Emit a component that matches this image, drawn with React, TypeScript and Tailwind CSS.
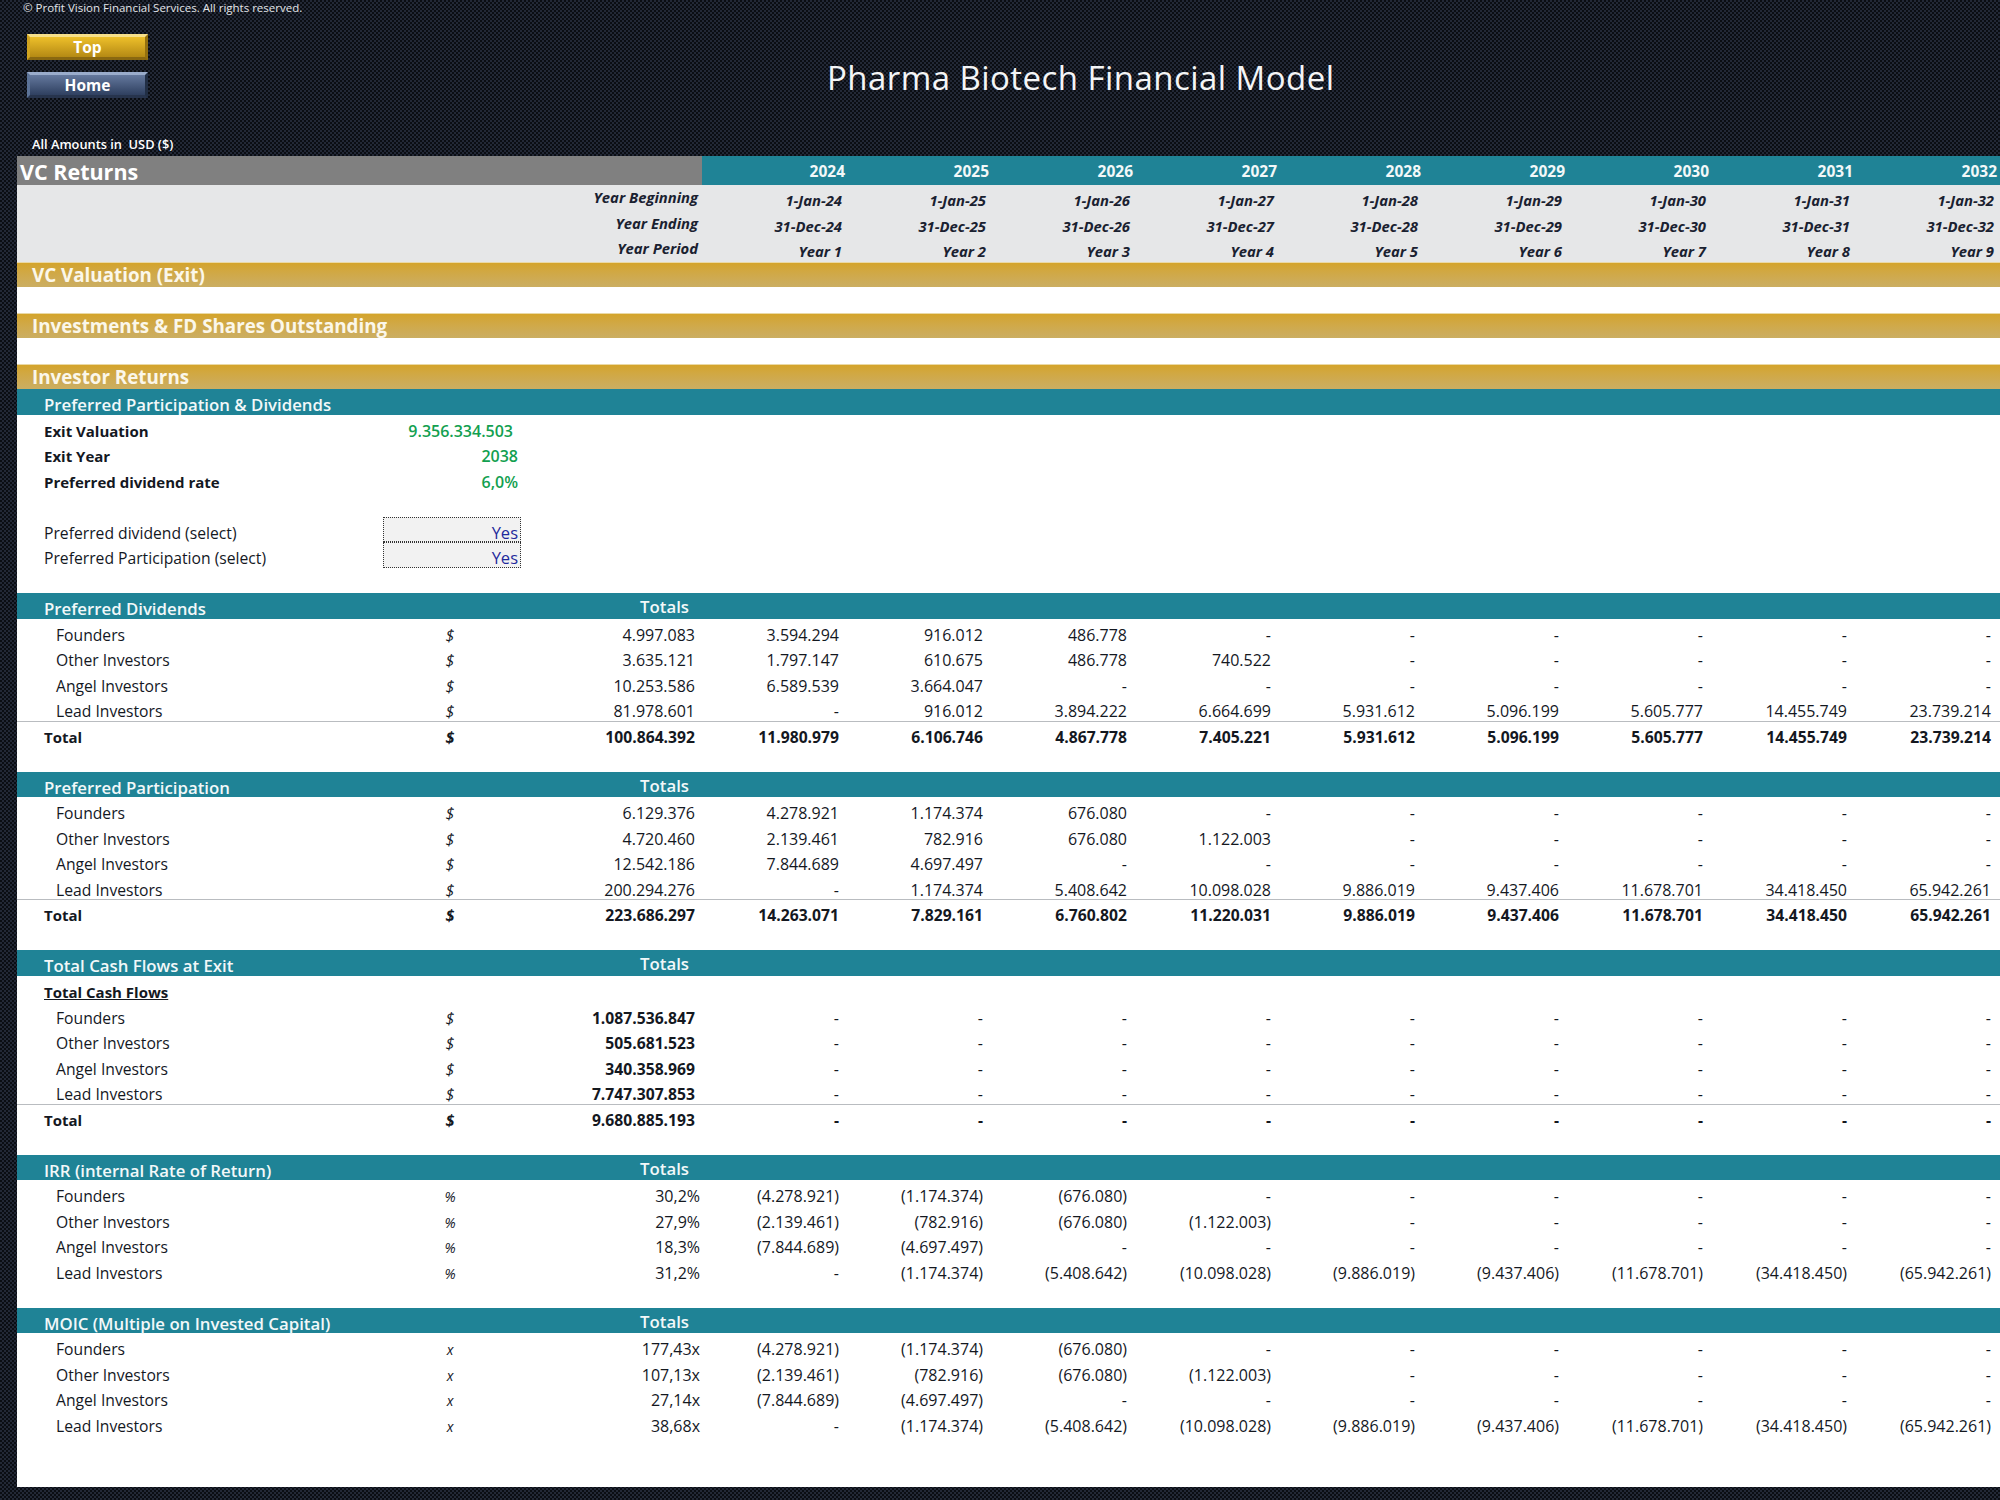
import React from "react";

const years = [2024, 2025, 2026, 2027, 2028, 2029, 2030, 2031, 2032];
const d = "-";

type Line = { label: string; total: string; values: string[]; bold?: boolean };

const dashes = [d, d, d, d, d, d, d, d, d];

const dividends: Line[] = [
  { label: "Founders", total: "4.997.083", values: ["3.594.294", "916.012", "486.778", d, d, d, d, d, d] },
  { label: "Other Investors", total: "3.635.121", values: ["1.797.147", "610.675", "486.778", "740.522", d, d, d, d, d] },
  { label: "Angel Investors", total: "10.253.586", values: ["6.589.539", "3.664.047", d, d, d, d, d, d, d] },
  { label: "Lead Investors", total: "81.978.601", values: [d, "916.012", "3.894.222", "6.664.699", "5.931.612", "5.096.199", "5.605.777", "14.455.749", "23.739.214"] },
  { label: "Total", bold: true, total: "100.864.392", values: ["11.980.979", "6.106.746", "4.867.778", "7.405.221", "5.931.612", "5.096.199", "5.605.777", "14.455.749", "23.739.214"] },
];

const participation: Line[] = [
  { label: "Founders", total: "6.129.376", values: ["4.278.921", "1.174.374", "676.080", d, d, d, d, d, d] },
  { label: "Other Investors", total: "4.720.460", values: ["2.139.461", "782.916", "676.080", "1.122.003", d, d, d, d, d] },
  { label: "Angel Investors", total: "12.542.186", values: ["7.844.689", "4.697.497", d, d, d, d, d, d, d] },
  { label: "Lead Investors", total: "200.294.276", values: [d, "1.174.374", "5.408.642", "10.098.028", "9.886.019", "9.437.406", "11.678.701", "34.418.450", "65.942.261"] },
  { label: "Total", bold: true, total: "223.686.297", values: ["14.263.071", "7.829.161", "6.760.802", "11.220.031", "9.886.019", "9.437.406", "11.678.701", "34.418.450", "65.942.261"] },
];

const cashFlows: Line[] = [
  { label: "Founders", total: "1.087.536.847", values: dashes },
  { label: "Other Investors", total: "505.681.523", values: dashes },
  { label: "Angel Investors", total: "340.358.969", values: dashes },
  { label: "Lead Investors", total: "7.747.307.853", values: dashes },
  { label: "Total", bold: true, total: "9.680.885.193", values: dashes },
];

const outflows = [
  ["(4.278.921)", "(1.174.374)", "(676.080)", d, d, d, d, d, d],
  ["(2.139.461)", "(782.916)", "(676.080)", "(1.122.003)", d, d, d, d, d],
  ["(7.844.689)", "(4.697.497)", d, d, d, d, d, d, d],
  [d, "(1.174.374)", "(5.408.642)", "(10.098.028)", "(9.886.019)", "(9.437.406)", "(11.678.701)", "(34.418.450)", "(65.942.261)"],
];
const names = ["Founders", "Other Investors", "Angel Investors", "Lead Investors"];
const irr: Line[] = ["30,2%", "27,9%", "18,3%", "31,2%"].map((total, i) => ({ label: names[i], total, values: outflows[i] }));
const moic: Line[] = ["177,43x", "107,13x", "27,14x", "38,68x"].map((total, i) => ({ label: names[i], total, values: outflows[i] }));

const GoldBar = ({ title }: { title: string }) => (
  <div className="h-[25.53px] bg-gradient-to-b from-[#d4a42a] to-[#cbae62] border-t border-[#ead9a6] pl-[15px] text-[18.8px] font-bold leading-[24px] text-[#fbf7ea]">
    {title}
  </div>
);

const TealBar = ({ title, totals }: { title: string; totals?: boolean }) => (
  <div className="h-[25.53px] bg-[#1f8396] flex text-[16.8px] font-semibold text-[#f2f8f9]">
    <div className="w-[483px] pl-[27px] pt-[4px] leading-[23.5px] whitespace-nowrap">{title}</div>
    {totals && <div className="w-[189px] text-right pt-[2px] leading-[23px]">Totals</div>}
  </div>
);

const DataRow = ({ line, unit, boldTotal, tightTotal }: { line: Line; unit: string; boldTotal?: boolean; tightTotal?: boolean }) => (
  <div
    className={`h-[25.53px] grid grid-cols-[383px_100px_202px_repeat(9,144px)] leading-[25.5px] text-[#14181f] ${
      line.bold ? "font-bold text-[15.7px] border-t border-[#b9bcc0] pt-[3px]" : "text-[16px] pt-[4px]"
    }`}
  >
    <div className={line.bold ? "pl-[27px] text-[15px]" : "pl-[39px] text-[15.7px]"}>{line.label}</div>
    <div className={`text-center italic ${unit === "$" ? "text-[16px]" : "text-[14px]"}`}>{unit}</div>
    <div className={`text-right ${tightTotal ? "pr-[2px]" : "pr-[7px]"} ${boldTotal ? "font-bold text-[15.7px]" : ""}`}>{line.total}</div>
    {line.values.map((v, i) => (
      <div key={i} className="text-right pr-[7px]">
        {v}
      </div>
    ))}
  </div>
);

const Block = ({ title, lines, unit, boldTotal, tightTotal, subhead }: { title: string; lines: Line[]; unit: string; boldTotal?: boolean; tightTotal?: boolean; subhead?: string }) => (
  <div className="pb-[25.53px]">
    <TealBar title={title} totals />
    {subhead && <div className="h-[25.53px] pl-[27px] pt-[4px] text-[15px] font-bold underline leading-[25.5px] text-[#14181f]">{subhead}</div>}
    {lines.map((line) => (
      <DataRow key={line.label} line={line} unit={unit} boldTotal={boldTotal} tightTotal={tightTotal} />
    ))}
  </div>
);

const DateRow = ({ label, values }: { label: string; values: string[] }) => (
  <div className="h-[25.53px] grid grid-cols-[685px_repeat(9,144px)] text-[14.8px] font-bold italic leading-[25.5px] text-[#1a2130]">
    <div className="text-right pr-[4px] pt-[1px] leading-[23px]">{label}</div>
    {values.map((v) => (
      <div key={v} className="text-right pr-[4px] pt-[3px]">
        {v}
      </div>
    ))}
  </div>
);

const Param = ({ label, value, bold, input, shift }: { label: string; value?: string; bold?: boolean; input?: boolean; shift?: boolean }) => (
  <div className={`h-[25.53px] grid grid-cols-[366px_138px] leading-[25.5px] pt-[4px] text-[#14181f] ${bold ? "font-bold text-[15px]" : "text-[15.7px]"}`}>
    <div className="pl-[27px] whitespace-nowrap">{label}</div>
    {input ? (
      <div className="-mt-[4px] h-[25.53px] bg-[#f2f2f2] border border-dotted border-[#333] pr-[2px] text-right pt-[2px] text-[16.5px] font-normal text-[#1f2a9c]">{value}</div>
    ) : (
      <div className={`text-right text-[16px] font-semibold text-[#12a050] ${shift ? "pr-[8px]" : "pr-[3px]"}`}>{value}</div>
    )}
  </div>
);

const ChromeButton = ({ label, gold }: { label: string; gold?: boolean }) => (
  <div
    className={`w-[121px] h-[26px] border-[3px] text-center text-[15.5px] font-bold leading-[20px] text-white ${
      gold
        ? "bg-gradient-to-b from-[#eec02a] to-[#b58a14] border-t-[#f7e08a] border-l-[#d0a31f] border-r-[#94700f] border-b-[#8a6810]"
        : "bg-gradient-to-b from-[#65799e] to-[#2f4060] border-t-[#9aaccb] border-l-[#5c7398] border-r-[#222f45] border-b-[#27344d]"
    }`}
  >
    {label}
  </div>
);

export default function App() {
  return (
    <div
      className="w-[2000px] h-[1500px] overflow-hidden bg-[conic-gradient(#222836_25%,#0a0d13_0_50%,#222836_0_75%,#0a0d13_0)] bg-[length:4px_4px]"
      style={{ fontFamily: '"Open Sans", sans-serif' }}
    >
      <header className="h-[156px] flex">
        <div className="w-[827px] pl-[23px]">
          <div className="h-[34px] text-[11.5px] leading-[16px] text-[#e3e5e8]">© Profit Vision Financial Services. All rights reserved.</div>
          <div className="pl-[4px] flex flex-col gap-[12px]">
            <ChromeButton label="Top" gold />
            <ChromeButton label="Home" />
          </div>
          <div className="pl-[9px] mt-[35px] text-[12.8px] font-semibold leading-[22px] text-white">All Amounts in&nbsp; USD ($)</div>
        </div>
        <h1 className="pt-[57px] text-[33px] tracking-[0.45px] leading-[42px] text-[#f4f5f6]">Pharma Biotech Financial Model</h1>
      </header>

      <main className="ml-[17px] h-[1331px] bg-white">
        <div className="h-[29px] flex">
          <div className="w-[685px] bg-[#808080] pl-[3px] text-[21.5px] font-bold leading-[31px] text-white">VC Returns</div>
          <div className="flex-1 bg-[#1f8396] grid grid-cols-[repeat(9,144px)] text-[15.5px] font-bold leading-[30px] text-[#f2f8f9]">
            {years.map((y) => (
              <div key={y} className="text-right pr-[1px]">
                {y}
              </div>
            ))}
          </div>
        </div>

        <div className="bg-[#e6e7e8]">
          <DateRow label="Year Beginning" values={years.map((y) => `1-Jan-${y - 2000}`)} />
          <DateRow label="Year Ending" values={years.map((y) => `31-Dec-${y - 2000}`)} />
          <DateRow label="Year Period" values={years.map((y) => `Year ${y - 2023}`)} />
        </div>

        <div className="flex flex-col gap-[25.53px]">
          <GoldBar title="VC Valuation (Exit)" />
          <GoldBar title="Investments & FD Shares Outstanding" />
          <GoldBar title="Investor Returns" />
        </div>

        <TealBar title="Preferred Participation & Dividends" />
        <div className="pb-[25.53px]">
          <Param label="Exit Valuation" value="9.356.334.503" bold shift />
          <Param label="Exit Year" value="2038" bold />
          <Param label="Preferred dividend rate" value="6,0%" bold />
          <div className="h-[25.53px]" />
          <Param label="Preferred dividend (select)" value="Yes" input />
          <Param label="Preferred Participation (select)" value="Yes" input />
        </div>

        <Block title="Preferred Dividends" lines={dividends} unit="$" />
        <Block title="Preferred Participation" lines={participation} unit="$" />
        <Block title="Total Cash Flows at Exit" lines={cashFlows} unit="$" boldTotal subhead="Total Cash Flows" />
        <Block title="IRR (internal Rate of Return)" lines={irr} unit="%" tightTotal />
        <Block title="MOIC (Multiple on Invested Capital)" lines={moic} unit="x" tightTotal />
      </main>
    </div>
  );
}
